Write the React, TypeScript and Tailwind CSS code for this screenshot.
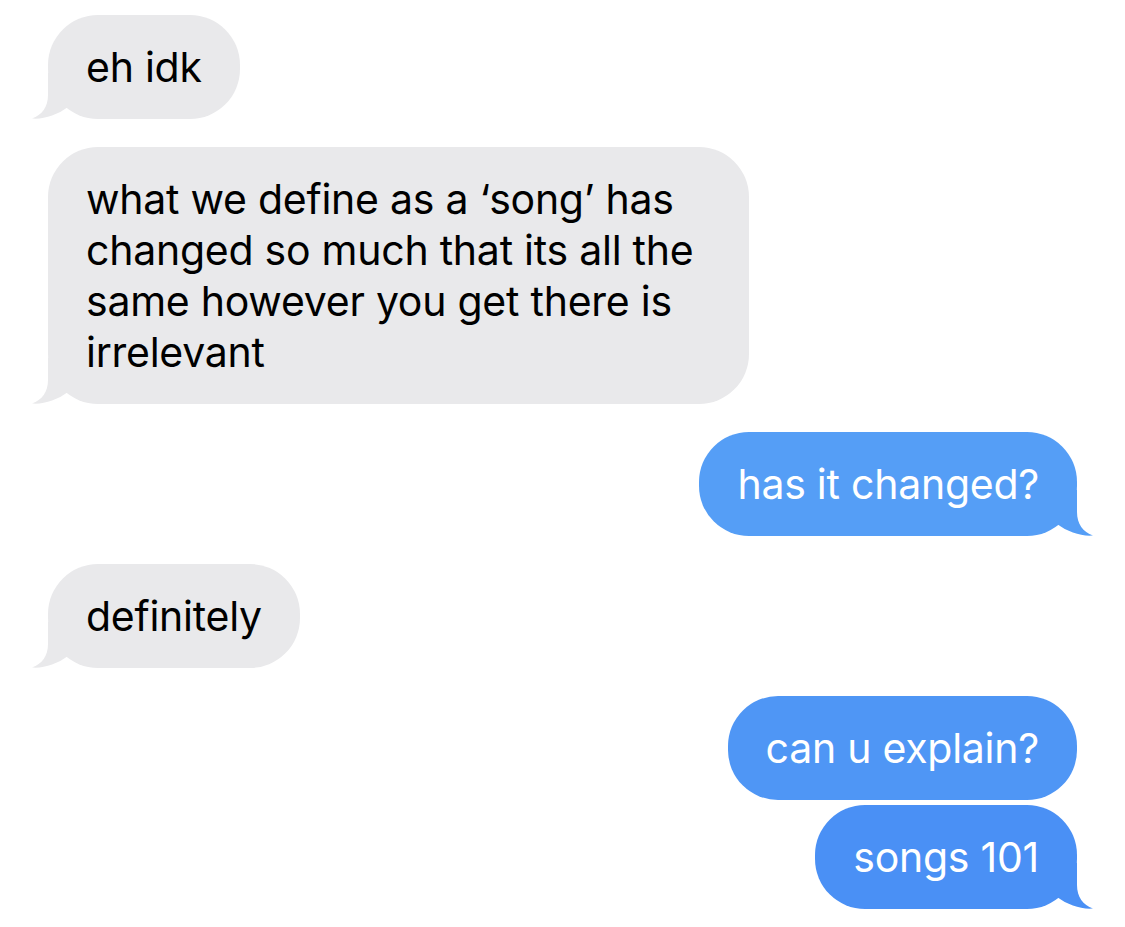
import React from 'react'

type Msg = { text: string[]; me: boolean; tail: boolean; color?: string; gap: string; pad?: string }

const messages: Msg[] = [
  { text: ['eh idk'], me: false, tail: true, gap: 'mt-[15px]' },
  { text: ['what we define as a ‘song’ has', 'changed so much that its all the', 'same however you get there is', 'irrelevant'], me: false, tail: true, gap: 'mt-[28px]', pad: 'pr-[56px]' },
  { text: ['has it changed?'], me: true, tail: true, color: 'bg-[#559ef6]', gap: 'mt-[28px]' },
  { text: ['definitely'], me: false, tail: true, gap: 'mt-[28px]' },
  { text: ['can u explain?'], me: true, tail: false, color: 'bg-[#4f96f5]', gap: 'mt-[28px]' },
  { text: ['songs 101'], me: true, tail: true, color: 'bg-[#4a90f5]', gap: 'mt-[5px]' },
]

const tailColor: Record<string, string> = {
  'bg-[#559ef6]': 'fill-[#559ef6]',
  'bg-[#4f96f5]': 'fill-[#4f96f5]',
  'bg-[#4a90f5]': 'fill-[#4a90f5]',
}

function Tail({ me, fill }: { me: boolean; fill: string }) {
  return (
    <svg
      viewBox="-16 -46 36 46"
      width={36}
      height={46}
      className={`absolute bottom-0 ${me ? 'right-[-16px] -scale-x-100' : 'left-[-16px]'} ${fill}`}
    >
      <path d="M0,-46 L0,-24 C0,-12 -6,-4 -16,-0.5 C-4,0.5 9,-4 20,-12 L20,-46 Z" />
    </svg>
  )
}

export default function App() {
  return (
    <div className="w-[1125px] h-[927px] bg-white flex flex-col px-[48px] overflow-hidden" style={{ fontFamily: 'Inter, "Noto Sans", sans-serif' }}>
      {messages.map((m, i) => (
        <div key={i} className={`${m.gap} flex ${m.me ? 'justify-end' : 'justify-start'}`}>
          <div
            className={`relative rounded-[50px] px-[38px] py-[26.5px] text-[41px] leading-[51px] tracking-[-0.25px] ${m.pad ?? ''} ${
              m.me ? `${m.color} text-white` : 'bg-[#e9e9eb] text-black'
            }`}
          >
            {m.tail && <Tail me={m.me} fill={m.me ? tailColor[m.color!] : 'fill-[#e9e9eb]'} />}
            <div className="relative">
              {m.text.map((t, j) => (
                <div key={j} className="whitespace-nowrap">{t}</div>
              ))}
            </div>
          </div>
        </div>
      ))}
    </div>
  )
}
